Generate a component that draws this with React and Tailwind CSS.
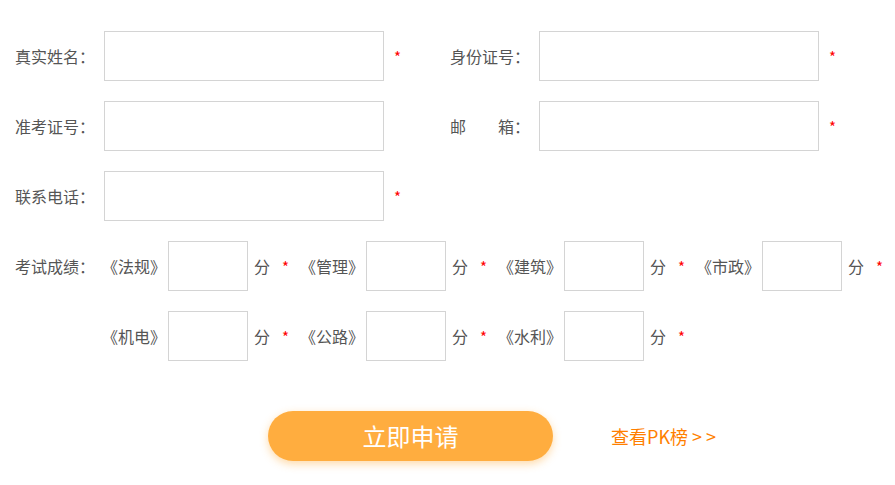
import React from "react";

const font = { fontFamily: '"Noto Sans CJK SC", "Noto Sans", sans-serif' };

function Star() {
  return <span className="text-[15px] leading-none text-[#ff0000]">*</span>;
}

function Field({ label }) {
  return (
    <div className="flex items-center">
      <div className="w-[89px] text-[16px] text-[#555] whitespace-nowrap">{label}</div>
      <input className="w-[280px] h-[50px] border border-[#d4d4d4] outline-none" />
    </div>
  );
}

function Score({ name }) {
  return (
    <div className="flex items-center w-[198px] shrink-0">
      <span className="w-[67px] pl-[4px] text-[16px] text-[#555] whitespace-nowrap">《{name}》</span>
      <input className="ml-[3px] w-[80px] h-[50px] border border-[#d4d4d4] outline-none" />
      <span className="ml-[6px] text-[16px] text-[#555]">分</span>
      <span className="ml-[12px] -mt-[1px]"><Star /></span>
    </div>
  );
}

export default function App() {
  return (
    <div className="w-[895px] h-[485px] bg-white pl-[15px] pt-[31px]" style={font}>
      <div className="flex items-center h-[50px]">
        <Field label="真实姓名：" />
        <div className="w-[66px] pl-[10px] -mt-[1px]"><Star /></div>
        <Field label="身份证号：" />
        <div className="pl-[10px] -mt-[1px]"><Star /></div>
      </div>
      <div className="flex items-center h-[50px] mt-[20px]">
        <Field label="准考证号：" />
        <div className="w-[66px]"></div>
        <Field label={<span>邮<span className="inline-block w-[32px]"></span>箱：</span>} />
        <div className="pl-[10px] -mt-[1px]"><Star /></div>
      </div>
      <div className="flex items-center h-[50px] mt-[20px]">
        <Field label="联系电话：" />
        <div className="w-[66px] pl-[10px] -mt-[1px]"><Star /></div>
      </div>
      <div className="flex items-center h-[50px] mt-[20px]">
        <div className="w-[83px] text-[16px] text-[#555] whitespace-nowrap">考试成绩：</div>
        <Score name="法规" />
        <Score name="管理" />
        <Score name="建筑" />
        <Score name="市政" />
      </div>
      <div className="flex items-center h-[50px] mt-[20px] pl-[83px]">
        <Score name="机电" />
        <Score name="公路" />
        <Score name="水利" />
      </div>
      <div className="flex items-center mt-[50px] pl-[253px]">
        <button className="w-[285px] h-[50px] rounded-full bg-[#ffad3f] text-white text-[24px] shadow-[0_3px_8px_rgba(255,173,63,0.45)]">
          立即申请
        </button>
        <a className="ml-[58px] text-[18px] text-[#ff7f00] whitespace-nowrap">查看PK榜 &gt; &gt;</a>
      </div>
    </div>
  );
}
